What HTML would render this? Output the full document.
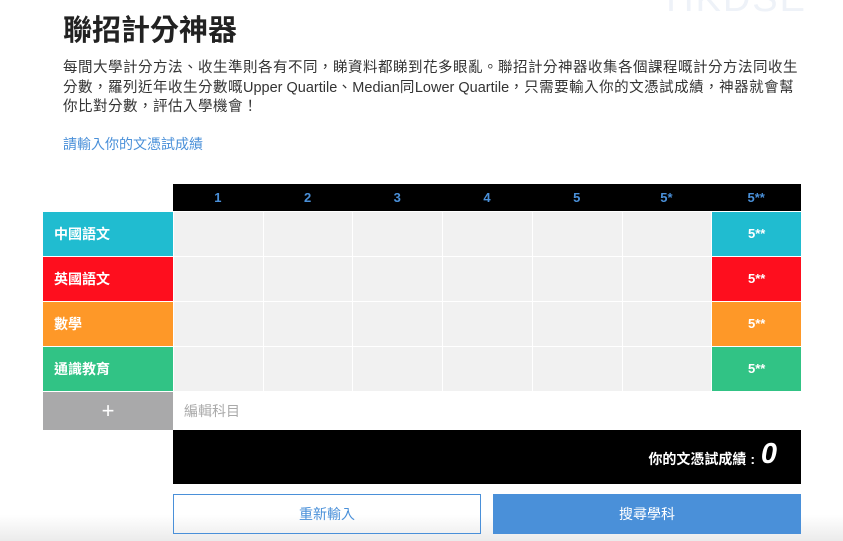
<!DOCTYPE html>
<html><head><meta charset="utf-8"><style>
*{margin:0;padding:0;box-sizing:border-box}
body{width:843px;height:541px;overflow:hidden;background:#fff;font-family:"Liberation Sans","Noto Sans CJK TC",sans-serif;position:relative}
.wm{position:absolute;right:36px;top:-22px;font-size:38px;color:#eef2f8;letter-spacing:2px}
h1{position:absolute;left:63px;top:7px;font-size:29px;font-weight:bold;color:#222}
p.d{position:absolute;left:63px;top:59px;width:760px;font-size:14.5px;line-height:19.5px;color:#333;white-space:nowrap;letter-spacing:0.5px}
p.d span{letter-spacing:0}
.lk{position:absolute;left:63px;top:134px;font-size:14px;color:#4a90d9}
.hd{position:absolute;left:173px;top:184px;width:628px;height:27px;background:#000;display:flex}
.hd div{flex:1;text-align:center;color:#4a90d9;font-size:13px;font-weight:bold;line-height:27px}
.row{position:absolute;left:43px;width:758px;height:44px;display:flex}
.lab{width:130px;color:#fff;font-size:14px;font-weight:bold;line-height:44px;padding-left:11px}
.c{flex:1;background:#f1f1f1;margin-left:1px}
.last{flex:1;margin-left:1px;color:#fff;font-weight:bold;font-size:13px;text-align:center;line-height:44px}
.add{position:absolute;left:43px;top:392px;width:130px;height:38px;background:#a9a9aa;color:#fff;font-size:22px;text-align:center;line-height:38px}
.ed{position:absolute;left:184px;top:401px;font-size:14px;color:#aaa}
.bar{position:absolute;left:173px;top:430px;width:628px;height:54px;background:#000;color:#fff}
.bar span{position:absolute;right:46px;top:19px;font-size:14px;font-weight:bold}
.bar i{position:absolute;right:24px;top:8px;font-size:29px;font-weight:bold}
.b1{position:absolute;left:173px;top:494px;width:308px;height:40px;border:1px solid #4a90d9;color:#4a90d9;text-align:center;line-height:38px;font-size:14px}
.b2{position:absolute;left:493px;top:494px;width:308px;height:40px;background:#4a90d9;color:#fff;text-align:center;line-height:40px;font-size:14px}
.fade{position:absolute;left:0;top:515px;width:843px;height:26px;background:linear-gradient(rgba(235,235,235,0),rgba(235,235,235,1))}
</style></head><body>
<div class="wm">HKDSE</div>
<h1>聯招計分神器</h1>
<p class="d">每間大學計分方法、收生準則各有不同，睇資料都睇到花多眼亂。聯招計分神器收集各個課程嘅計分方法同收生<br>分數，羅列近年收生分數嘅<span>Upper Quartile</span>、<span>Median</span>同<span>Lower Quartile</span>，只需要輸入你的文憑試成績，神器就會幫<br>你比對分數，評估入學機會！</p>
<div class="lk">請輸入你的文憑試成績</div>
<div class="hd"><div>1</div><div>2</div><div>3</div><div>4</div><div>5</div><div>5*</div><div>5**</div></div>
<div class="row" style="top:212px"><div class="lab" style="background:#20bcd0">中國語文</div><div class="c"></div><div class="c"></div><div class="c"></div><div class="c"></div><div class="c"></div><div class="c"></div><div class="last" style="background:#20bcd0">5**</div></div>
<div class="row" style="top:257px"><div class="lab" style="background:#fe0e1e">英國語文</div><div class="c"></div><div class="c"></div><div class="c"></div><div class="c"></div><div class="c"></div><div class="c"></div><div class="last" style="background:#fe0e1e">5**</div></div>
<div class="row" style="top:302px"><div class="lab" style="background:#fe9828">數學</div><div class="c"></div><div class="c"></div><div class="c"></div><div class="c"></div><div class="c"></div><div class="c"></div><div class="last" style="background:#fe9828">5**</div></div>
<div class="row" style="top:347px"><div class="lab" style="background:#31c385">通識教育</div><div class="c"></div><div class="c"></div><div class="c"></div><div class="c"></div><div class="c"></div><div class="c"></div><div class="last" style="background:#31c385">5**</div></div>
<div class="add">+</div>
<div class="ed">編輯科目</div>
<div class="bar"><span>你的文憑試成績 :</span><i>0</i></div>
<div class="fade"></div>
<div class="b1">重新輸入</div>
<div class="b2">搜尋學科</div>
</body></html>
